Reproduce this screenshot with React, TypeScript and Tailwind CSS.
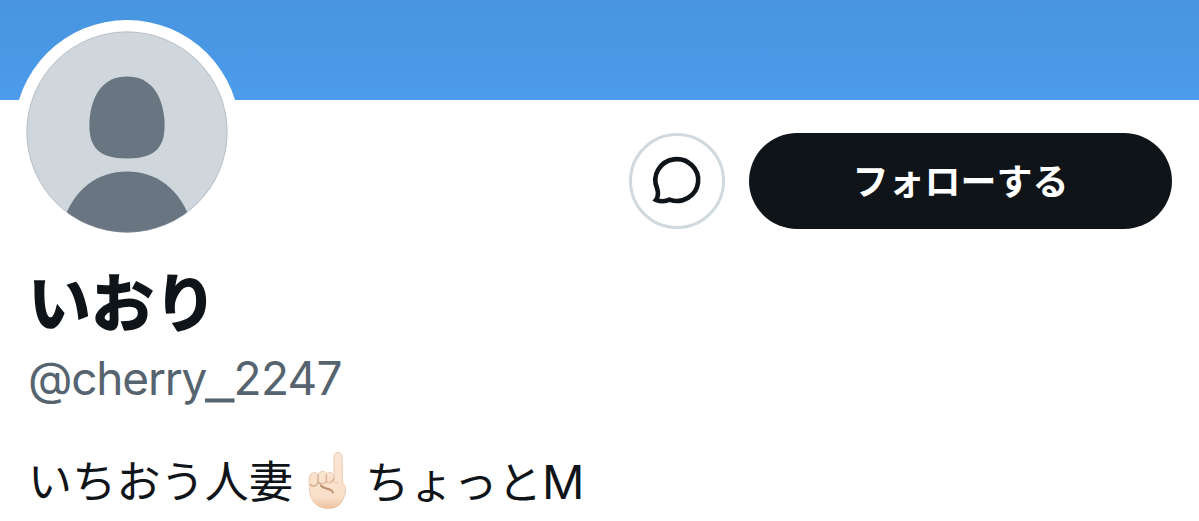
function Avatar() {
  return (
    <div className="h-[226px] w-[226px] rounded-full bg-white px-3 pt-[11px] pb-[13px]">
      <svg viewBox="0 0 202 202" className="h-full w-full">
        <defs>
          <clipPath id="avatar-circle">
            <circle cx="101" cy="101" r="100.5" />
          </clipPath>
        </defs>
        <g clipPath="url(#avatar-circle)">
          <rect width="202" height="202" fill="#cfd6dc" />
          <path
            d="M101 45.5C123 45.500 136 61 138.500 89C140 116 130 127.500 101 127.500S62 116 63.500 89C66 61 79 45.500 101 45.500z"
            fill="#697682"
          />
          <path d="M36 193c12-36 36-52.500 65-52.500s53 16.500 65 52.500v10H36z" fill="#697682" />
        </g>
        <circle cx="101" cy="101" r="100.200" fill="none" stroke="#8b98a5" strokeOpacity="0.500" strokeWidth="0.800" />
      </svg>
    </div>
  );
}

function MessageIcon() {
  return (
    <svg viewBox="0 0 56 56" className="h-14 w-14" fill="none" stroke="#0f1419" strokeWidth="4.600">
      <path d="M7 46.800C9.800 43 9.300 39 8 35A21.400 20.900 0 1 1 20.500 46.700C16.500 48.500 11.500 48.700 7 46.800Z" />
    </svg>
  );
}

function PointingHand() {
  return (
    <svg viewBox="0 0 44 60" className="mr-[17px] mb-1 ml-[11px] h-[60px] w-11" role="img" aria-label="☝🏻">
      <defs>
        <linearGradient id="skin" x1="0" y1="0" x2="0" y2="1">
          <stop offset="0" stopColor="#fbe6d5" />
          <stop offset="0.800" stopColor="#f9dfc8" />
          <stop offset="1" stopColor="#eac19f" />
        </linearGradient>
      </defs>
      <path
        d="M30 28V6.500C30 1 38 1 38 6.500L38.600 33C42 36 42.500 41 40.500 45.500C38 54 33.500 58.500 24.500 58.500C13 58.500 6 51 5.500 40L5 29C5 23 11 21 14.500 24C17 20 22 21 22.500 24C25 20.500 29.500 22 30 28Z"
        fill="url(#skin)"
        stroke="#e6c2a5"
        strokeWidth="0.800"
      />
      <path
        d="M6 34C9 37.500 13.500 36 14 32V24.500M14 32C16 34.500 21 34 22.300 31.500V24.500M22.300 31.500C25 34 29 32 30 28"
        fill="none"
        stroke="#d5ab8b"
        strokeWidth="1.300"
      />
      <path d="M17 34.500C22 32 29 31.500 34 33" fill="none" stroke="#efcfb5" strokeWidth="1" />
      <path d="M17 35.500C19 39.500 27 37.500 29 42.500" fill="none" stroke="#bd9070" strokeWidth="2" strokeLinecap="round" />
    </svg>
  );
}

export default function App() {
  return (
    <div className="h-[521px] w-full overflow-hidden bg-white font-['Inter','Noto_Sans_CJK_JP',sans-serif] text-[#0f1419]">
      {/* Cover */}
      <div className="h-[100px] bg-linear-to-b from-[#4894df] to-[#4b9cea]" />

      {/* Avatar and actions */}
      <div className="-mt-20 flex justify-between pr-[27px] pl-[14px]">
        <Avatar />
        <div className="mt-[113px] flex h-24 gap-6">
          <button className="flex w-24 items-center justify-center rounded-full border-[3px] border-[#cfd9de]">
            <MessageIcon />
          </button>
          <button className="h-24 w-[423px] rounded-full bg-[#0f1419] pt-0.5 text-[36px] font-bold text-white">
            フォローする
          </button>
        </div>
      </div>

      {/* Profile */}
      <div className="pl-7">
        <h1 className="mt-[21px] text-[63px] leading-[72px] font-bold [-webkit-text-stroke:1.5px_#0f1419]">
          いおり
        </h1>
        <p className="mt-[11px] flex h-14 items-baseline text-[46px] leading-[56px] text-[#566470]">
          <span className="tracking-[-1.2px]">@cherry</span>
          <span className="-translate-y-[3px] font-['Liberation_Sans',sans-serif] text-[49px] leading-none [-webkit-text-stroke:0.9px_#566470]">
            _
          </span>
          <span className="tracking-[-0.7px]">2247</span>
        </p>
        <p className="mt-11 flex h-[64px] items-center text-[44px] leading-[60px]">
          <span className="tracking-[0.200px]">いちおう人妻</span>
          <PointingHand />
          <span className="tracking-[0.200px]">
            ちょっと<span className="text-[47px]">M</span>
          </span>
        </p>
      </div>
    </div>
  );
}
